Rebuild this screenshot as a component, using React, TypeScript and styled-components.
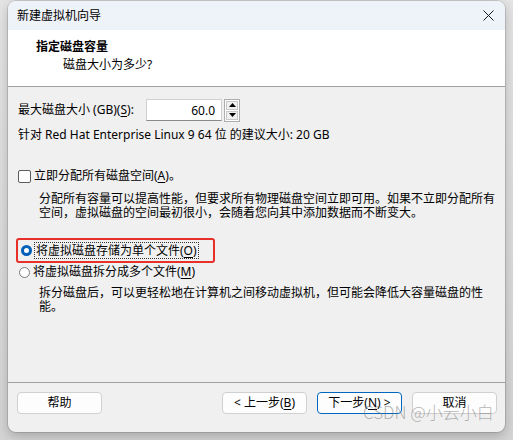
import React from "react";
import styled, { createGlobalStyle } from "styled-components";

const Global = createGlobalStyle`
  html, body { margin: 0; padding: 0; }
  body {
    width: 513px; height: 440px; overflow: hidden;
    background: linear-gradient(#e4e4e4, #d4d4d4);
    font-family: "Noto Sans", "Noto Sans CJK SC", sans-serif;
    font-size: 12px; color: #000;
  }
`;

const Window = styled.div`
  margin: 1px 0 0 8px;
  width: 497px;
  height: 431px;
  border-radius: 8px;
  overflow: hidden;
  display: flex;
  flex-direction: column;
  background: #f0f0f0;
  box-shadow: 0 4px 12px rgba(0,0,0,0.22), 0 0 0 1px rgba(0,0,0,0.12);
`;

const TitleBar = styled.div`
  height: 29px;
  flex: none;
  background: #eef2f9;
  display: flex;
  align-items: center;
  justify-content: space-between;
  padding: 0 10px 0 9px;
`;

const TitleText = styled.span`
  font-size: 12px;
  line-height: 14px;
`;

const CloseIcon = styled.svg`
  width: 11px;
  height: 11px;
  margin-right: 1px;
`;

const Header = styled.div`
  flex: none;
  background: #fff;
  border-bottom: 1px solid #a0a0a0;
  padding: 9px 0 0 28px;
  box-sizing: border-box;
  height: 57px;
`;

const HeaderTitle = styled.div`
  font-weight: bold;
  line-height: 16px;
`;

const HeaderSub = styled.div`
  margin-top: 2px;
  padding-left: 27px;
  line-height: 16px;
`;

const Content = styled.div`
  flex: 1;
  padding: 11px 8px 0 10px;
  display: flex;
  flex-direction: column;
`;

const SizeRow = styled.div`
  display: flex;
  align-items: center;
  height: 24px;
`;

const Label = styled.span`
  width: 128px;
  line-height: 16px;
  white-space: nowrap;
`;

const U = styled.span`
  text-decoration: underline;
  text-underline-offset: 2px;
`;

const NumInput = styled.div`
  width: 76px;
  height: 22px;
  box-sizing: border-box;
  background: #fff;
  border: 1px solid #d0d0d0;
  border-bottom: 1px solid #8a8a8a;
  text-align: right;
  padding: 2px 6px 0 0;
  line-height: 17px;
`;

const Spinner = styled.div`
  margin-left: 2px;
  width: 16px;
  height: 23px;
  display: flex;
  flex-direction: column;
  gap: 1px;
  border: 1px solid #adadad;
  box-sizing: border-box;
  padding: 1px;
  background: #fff;
`;

const SpinBtn = styled.div`
  flex: 1;
  background: #f0f0f0;
  border: 1px solid #c8c8c8;
  display: flex;
  align-items: center;
  justify-content: center;
`;

const InfoLine = styled.div`
  margin-top: 5px;
  line-height: 16px;
`;

const OptionRow = styled.div<{ $top: number }>`
  margin-top: ${(p) => p.$top}px;
  display: flex;
  align-items: center;
  line-height: 16px;
`;

const Check = styled.span`
  width: 11px;
  height: 11px;
  border: 1px solid #5c5c5c;
  border-radius: 2px;
  background: #fff;
  margin-right: 3px;
  flex: none;
`;

const Radio = styled.span<{ $on?: boolean }>`
  width: 11px;
  height: 11px;
  border-radius: 50%;
  box-sizing: border-box;
  flex: none;
  margin-right: 3px;
  margin-left: 1px;
  background: #fff;
  border: ${(p) => (p.$on ? "3.5px solid #005fb8" : "1px solid #7a7a7a")};
`;

const Desc = styled.div<{ $top: number }>`
  margin-top: ${(p) => p.$top}px;
  padding-left: 21px;
  line-height: 14px;
`;

const Highlight = styled.div`
  margin: 18px 0 0 -2px;
  width: 199px;
  height: 25px;
  box-sizing: border-box;
  border: 2px solid #e8302a;
  border-radius: 3px;
  display: flex;
  align-items: center;
  padding-left: 2px;
`;

const Focus = styled.span`
  outline: 1px dotted #333;
  outline-offset: 0px;
  padding: 0 1px;
  line-height: 15px;
  white-space: nowrap;
`;

const Footer = styled.div`
  height: 40px;
  flex: none;
  border-top: 1px solid #a0a0a0;
  display: flex;
  align-items: flex-start;
  padding: 9px 8px 0 9px;
  gap: 10px;
`;

const Btn = styled.button<{ $primary?: boolean }>`
  width: 85px;
  height: 22px;
  box-sizing: border-box;
  background: #fdfdfd;
  border: 1px solid ${(p) => (p.$primary ? "#0067c0" : "#d0d0d0")};
  border-radius: 4px;
  font-family: inherit;
  font-size: 12px;
  color: #000;
  padding: 0;
  line-height: 16px;
  white-space: nowrap;
`;

const Spacer = styled.div`
  flex: 1;
`;

const Watermark = styled.div`
  position: absolute;
  left: 363px;
  top: 401px;
  font-size: 17px;
  line-height: 22px;
  white-space: nowrap;
  color: rgba(120, 120, 120, 0.55);
  font-family: "Noto Sans CJK SC", sans-serif;
  font-weight: 300;
  pointer-events: none;
`;

export default function App() {
  return (
    <>
      <Global />
      <Window>
        <TitleBar>
          <TitleText>新建虚拟机向导</TitleText>
          <CloseIcon viewBox="0 0 11 11">
            <path d="M0.5 0.5 L10.5 10.5 M10.5 0.5 L0.5 10.5" stroke="#1a1a1a" strokeWidth="1" />
          </CloseIcon>
        </TitleBar>
        <Header>
          <HeaderTitle>指定磁盘容量</HeaderTitle>
          <HeaderSub>磁盘大小为多少?</HeaderSub>
        </Header>
        <Content>
          <SizeRow>
            <Label>
              最大磁盘大小 (GB)(<U>S</U>):
            </Label>
            <NumInput>60.0</NumInput>
            <Spinner>
              <SpinBtn>
                <svg width="7" height="4" viewBox="0 0 7 4"><path d="M0 4 L3.5 0 L7 4Z" fill="#000" /></svg>
              </SpinBtn>
              <SpinBtn>
                <svg width="7" height="4" viewBox="0 0 7 4"><path d="M0 0 L3.5 4 L7 0Z" fill="#000" /></svg>
              </SpinBtn>
            </Spinner>
          </SizeRow>
          <InfoLine>针对 Red Hat Enterprise Linux 9 64 位 的建议大小: 20 GB</InfoLine>
          <OptionRow $top={25}>
            <Check />
            <span>
              立即分配所有磁盘空间(<U>A</U>)。
            </span>
          </OptionRow>
          <Desc $top={8}>
            分配所有容量可以提高性能，但要求所有物理磁盘空间立即可用。如果不立即分配所有空间，虚拟磁盘的空间最初很小，会随着您向其中添加数据而不断变大。
          </Desc>
          <Highlight>
            <Radio $on />
            <Focus>
              将虚拟磁盘存储为单个文件(<U>O</U>)
            </Focus>
          </Highlight>
          <OptionRow $top={1}>
            <Radio />
            <span>
              将虚拟磁盘拆分成多个文件(<U>M</U>)
            </span>
          </OptionRow>
          <Desc $top={6}>
            拆分磁盘后，可以更轻松地在计算机之间移动虚拟机，但可能会降低大容量磁盘的性能。
          </Desc>
        </Content>
        <Footer>
          <Btn>帮助</Btn>
          <Spacer />
          <Btn>
            &lt; 上一步(<U>B</U>)
          </Btn>
          <Btn $primary>
            下一步(<U>N</U>) &gt;
          </Btn>
          <Btn>取消</Btn>
        </Footer>
      </Window>
      <Watermark>CSDN @小云小白</Watermark>
    </>
  );
}
